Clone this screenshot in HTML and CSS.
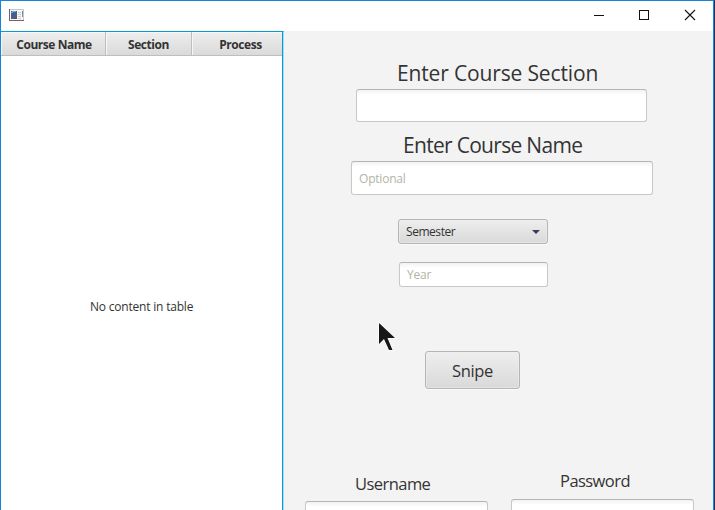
FILE: index.html
```html
<!DOCTYPE html>
<html lang="en">
<head>
<meta charset="utf-8">
<title>Course Sniper</title>
<link rel="stylesheet" href="styles.css">
</head>
<body>
<div class="window">
  <header class="titlebar">
    <svg class="app-icon" width="15" height="12" viewBox="0 0 15 12" shape-rendering="crispEdges">
      <rect width="15" height="12" fill="#c9c6c6"/><rect x="1" y="1" width="13" height="10" fill="#f5f5f5"/>
      <path d="M0 0h1v11h14v1H0z" fill="#776261"/>
      <rect x="2" y="2" width="6" height="8" fill="#485b94"/><path d="M3 2h4v1H3zM2 3h2v1H2z" fill="#55b5eb"/><path d="M6 8h2v2H5V9h1z" fill="#6b4c55"/>
      <path d="M9 3h3v1H9zM9 5h3v1H9zM9 7h3v1H9zM9 9h3v1H9z" fill="#ccc"/><path d="M13 2h1v3h-1z" fill="#3c91d0"/><path d="M13 5h1v3h-1z" fill="#b68063"/>
    </svg>
    <svg class="controls" width="102" height="12" viewBox="0 0 102 12" fill="none" stroke="#111">
      <path d="M0 6.5h10"/><rect x="45.500" y="1.500" width="9" height="9"/><path d="M91 1l10 10M101 1L91 11" stroke-width="1.100"/>
    </svg>
  </header>
  <div class="content">
    <section class="table">
      <div class="table-head">
        <div class="th">Course Name</div><div class="th">Section</div><div class="th process">Process</div>
      </div>
      <div class="placeholder"><span>No content in table</span></div>
    </section>
    <main class="panel">
      <label class="heading section-label">Enter Course Section</label>
      <div class="field section-field"></div>
      <label class="heading name-label">Enter Course Name</label>
      <div class="field name-field">Optional</div>
      <div class="button combo"><span>Semester</span><i class="arrow"></i></div>
      <div class="field year-field">Year</div>
      <div class="button snipe"><span>Snipe</span></div>
      <div class="login">
        <div class="account"><label class="user-label">Username</label><div class="field"></div></div>
        <div class="account password"><label class="pass-label">Password</label><div class="field"></div></div>
      </div>
    </main>
  </div>
</div>
<svg class="cursor" width="20" height="32" viewBox="0 0 20 32">
  <path d="M1 1V22L6 17L11 28H14.500L9.500 16H17z" fill="#171717" stroke="#fff" stroke-width="1.500" paint-order="stroke"/>
</svg>
</body>
</html>
```
FILE: styles.css
```css
* { box-sizing: border-box; }
body { margin: 0; overflow: hidden; background: #2c3153; font-family: "Open Sans", "Noto Sans", sans-serif; font-size: 12px; color: #333; }
.window { width: 714px; height: 510px; border: solid #1883d7; border-width: 1px 1px 0; background: #f3f3f3; display: flex; flex-direction: column; overflow: hidden; }
.titlebar { height: 30px; flex: none; display: flex; align-items: center; justify-content: space-between; background: #fff; padding: 0 17px 2px 8px; }
.content { display: flex; flex: 1; min-height: 0; }
.table { width: 283px; flex: none; display: flex; flex-direction: column; background: #fff; border-top: 1px solid #039ed3; border-right: 1px solid #a8dced; box-shadow: inset -1px 0 #039ed3; padding-right: 1px; }
.table-head { display: flex; height: 24px; }
.th { width: 86px; padding-top: 1px; line-height: 23px; text-align: center; font-weight: 700; letter-spacing: -0.45px; white-space: nowrap; background: linear-gradient(#eee, #dadada); border-right: 1px solid #bebebe; border-bottom: 1px solid #bebebe; box-shadow: inset 1px 1px #f6f6f6; }
.th:first-child { width: 105px; padding-left: 2px; }
.th.process { width: 90px; padding-left: 7px; border-right: 0; }
.placeholder { flex: 1; padding: 242px 0 0 89px; line-height: 18px; letter-spacing: -0.2px; }
.panel { flex: 1; display: flex; flex-direction: column; align-items: flex-start; }
.panel > * { flex-shrink: 0; }
.heading { font-size: 21px; line-height: 28px; letter-spacing: -0.15px; white-space: nowrap; }
.section-label { margin: 28px 0 0 113px; }
.name-label { margin: 9px 0 0 119px; letter-spacing: -0.7px; }
.field { border: 1px solid #c8c8c8; border-top-color: #b5b5b5; border-radius: 3px; background: linear-gradient(#f2f2f2, #fff 5px); color: #b0b5a7; padding: 0 7px; letter-spacing: -0.2px; }
.section-field { width: 291px; height: 33px; margin: 2px 0 0 72px; }
.name-field { width: 302px; height: 34px; margin: 2px 0 0 67px; line-height: 33px; }
.year-field { width: 149px; height: 25px; margin: 18px 0 0 115px; line-height: 24px; }
.button { display: flex; align-items: center; border: 1px solid #b5b5b5; border-radius: 3px; background: linear-gradient(#eee, #d9d9d9); box-shadow: inset 0 0 0 1px #f0f0f080, 0 1px #fafafa; }
.combo { width: 150px; height: 25px; margin: 24px 0 0 114px; padding: 0 7px; justify-content: space-between; letter-spacing: -0.45px; }
.arrow { border: 4px solid transparent; border-top-color: #39395a; border-bottom: 0; }
.snipe { width: 95px; height: 38px; margin: 64px 0 0 141px; justify-content: center; font-size: 16.5px; letter-spacing: -0.3px; }
.login { display: flex; gap: 23px; margin: 80px 0 0 21px; }
.account { width: 183px; display: flex; flex-direction: column; font-size: 16.5px; line-height: 24px; letter-spacing: -0.55px; }
.account .field { height: 30px; }
.user-label { margin: 3px 0 5px 50px; }
.pass-label { margin: 0 0 6px 49px; }
.cursor { position: absolute; left: 378px; top: 322px; }
```
